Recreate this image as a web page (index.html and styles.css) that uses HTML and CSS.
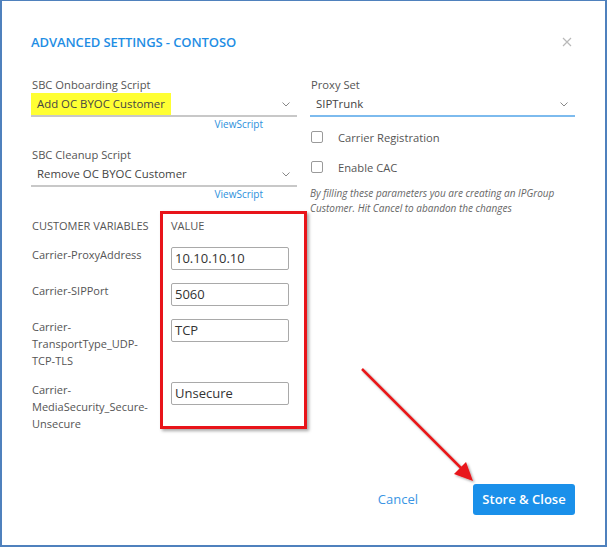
FILE: index.html
```html
<!DOCTYPE html>
<html>
<head>
<meta charset="utf-8">
<link rel="stylesheet" href="styles.css">
</head>
<body>
<div class="frame">
  <div class="dialog">
    <div class="header">
      <h1 class="title">ADVANCED SETTINGS - CONTOSO</h1>
      <svg class="close" width="10" height="10" viewBox="0 0 10 10"><path d="M1 1L9 9M9 1L1 9" stroke="#b9b9b9" stroke-width="1.2" fill="none"/></svg>
    </div>
    <div class="columns">
      <div class="col left">
        <div class="field">
          <div class="label">SBC Onboarding Script</div>
          <div class="select gray"><span class="value hl">Add OC BYOC Customer</span><svg class="chev" width="8" height="5" viewBox="0 0 8 5"><path d="M0.5 0.5L4 4L7.5 0.5" stroke="#888" stroke-width="1" fill="none"/></svg></div>
          <div class="link">ViewScript</div>
        </div>
        <div class="field second">
          <div class="label">SBC Cleanup Script</div>
          <div class="select gray"><span class="value">Remove OC BYOC Customer</span><svg class="chev" width="8" height="5" viewBox="0 0 8 5"><path d="M0.5 0.5L4 4L7.5 0.5" stroke="#888" stroke-width="1" fill="none"/></svg></div>
          <div class="link">ViewScript</div>
        </div>
        <div class="vars">
          <div class="vhead"><span class="vname">CUSTOMER VARIABLES</span><span>VALUE</span></div>
          <div class="vrow"><span class="vname">Carrier-ProxyAddress</span><div class="input">10.10.10.10</div></div>
          <div class="vrow"><span class="vname">Carrier-SIPPort</span><div class="input">5060</div></div>
          <div class="vrow"><span class="vname">Carrier-TransportType_UDP-TCP-TLS</span><div class="input">TCP</div></div>
          <div class="vrow"><span class="vname">Carrier-MediaSecurity_Secure-Unsecure</span><div class="input">Unsecure</div></div>
        </div>
      </div>
      <div class="col right">
        <div class="field">
          <div class="label">Proxy Set</div>
          <div class="select blue"><span class="value">SIPTrunk</span><svg class="chev" width="8" height="5" viewBox="0 0 8 5"><path d="M0.5 0.5L4 4L7.5 0.5" stroke="#888" stroke-width="1" fill="none"/></svg></div>
        </div>
        <div class="check first"><span class="box"></span><span>Carrier Registration</span></div>
        <div class="check"><span class="box"></span><span>Enable CAC</span></div>
        <p class="note">By filling these parameters you are creating an IPGroup Customer. Hit Cancel to abandon the changes</p>
      </div>
    </div>
    <div class="footer">
      <span class="cancel">Cancel</span>
      <span class="primary">Store &amp; Close</span>
    </div>
  </div>
  <div class="redbox"></div>
  <svg class="arrow" width="607" height="547" viewBox="0 0 607 547">
    <defs>
      <filter id="sh" x="-20%" y="-20%" width="140%" height="140%"><feDropShadow dx="1.5" dy="1.5" stdDeviation="1" flood-color="#000" flood-opacity="0.35"/></filter>
    </defs>
    <g filter="url(#sh)">
      <line x1="362" y1="369" x2="464" y2="471" stroke="#e8141a" stroke-width="2.5"/>
      <polygon points="473,481 454,474 466,462" fill="#e8141a"/>
    </g>
  </svg>
</div>
</body>
</html>
```

FILE: styles.css
```css
* { box-sizing: border-box; }
html, body { margin: 0; padding: 0; background: #fff; }
body { font-family: "Open Sans", "Noto Sans", sans-serif; color: #555; }

.frame {
  position: relative;
  width: 607px;
  height: 547px;
  border: 2px solid #4f81bd;
  border-top-width: 1px;
  background: #fff;
  overflow: hidden;
}

.dialog {
  height: 100%;
  display: flex;
  flex-direction: column;
  padding: 32px 30px 30px 29px;
}

.header {
  display: flex;
  align-items: center;
  justify-content: space-between;
  height: 18px;
}
.title {
  margin: 0;
  font-size: 13px;
  font-weight: 600;
  color: #1f8ee4;
  line-height: 18px;
  letter-spacing: -0.1px;
}
.close { margin-right: 3px; }

.columns {
  display: grid;
  grid-template-columns: 266px 265px;
  column-gap: 13px;
  margin-top: 26px;
}

.label {
  font-size: 11.2px;
  line-height: 16px;
  color: #555;
  padding-left: 1px;
}
.select {
  height: 24px;
  display: flex;
  align-items: center;
  justify-content: space-between;
  border-bottom: 2px solid #c8c8c8;
  font-size: 11.4px;
  color: #444;
}
.select.blue { border-bottom-color: #7dbbee; }
.select .value { padding: 0 6px; height: 22px; line-height: 22px; }
.select .value.hl { background: #ffff33; }
.chev { margin-right: 7px; }

.link {
  font-size: 10px;
  line-height: 14px;
  color: #2d8fdc;
  text-align: right;
  padding-right: 34px;
}
.field.second { margin-top: 16px; }

.vars { margin-top: 17px; font-size: 11px; }
.vhead { display: grid; grid-template-columns: 139px auto; line-height: 16px; color: #555; padding-left: 1px; }
.vrow {
  display: grid;
  grid-template-columns: 124px 118px;
  column-gap: 15px;
  align-items: start;
  margin-top: 12px;
  line-height: 17px;
  color: #555;
  padding-left: 1px;
}
.input {
  margin-top: 1px;
  height: 23px;
  border: 1px solid #a9a9a9;
  border-radius: 2px;
  padding: 0 3px;
  font-size: 13px;
  line-height: 21px;
  color: #333;
}

.check {
  display: flex;
  align-items: center;
  height: 16px;
  font-size: 11.2px;
  color: #555;
  margin-top: 14px;
}
.check.first { margin-top: 12px; }
.box {
  width: 12px;
  height: 12px;
  border: 1.3px solid #9a9a9a;
  border-radius: 2px;
  margin-right: 15px;
  margin-left: 1px;
}
.note {
  margin: 11px 0 0 0;
  font-size: 10px;
  font-style: italic;
  line-height: 15px;
  color: #666;
}

.footer {
  margin-top: auto;
  display: flex;
  justify-content: flex-end;
  align-items: center;
}
.cancel {
  font-size: 13px;
  color: #3a95e4;
  margin-right: 55px;
  margin-bottom: 2px;
}
.primary {
  display: inline-block;
  width: 102px;
  height: 31px;
  line-height: 30px;
  text-align: center;
  background: #1a90ea;
  color: #fff;
  font-size: 13px;
  font-weight: 600;
  border-radius: 3px;
}

.redbox {
  position: absolute;
  left: 158px;
  top: 210px;
  width: 147px;
  height: 218px;
  border: 3px solid #e8141a;
  box-shadow: 2px 2px 3px rgba(0,0,0,0.35);
  pointer-events: none;
}
.arrow {
  position: absolute;
  left: -2px;
  top: -1px;
  pointer-events: none;
}
```
